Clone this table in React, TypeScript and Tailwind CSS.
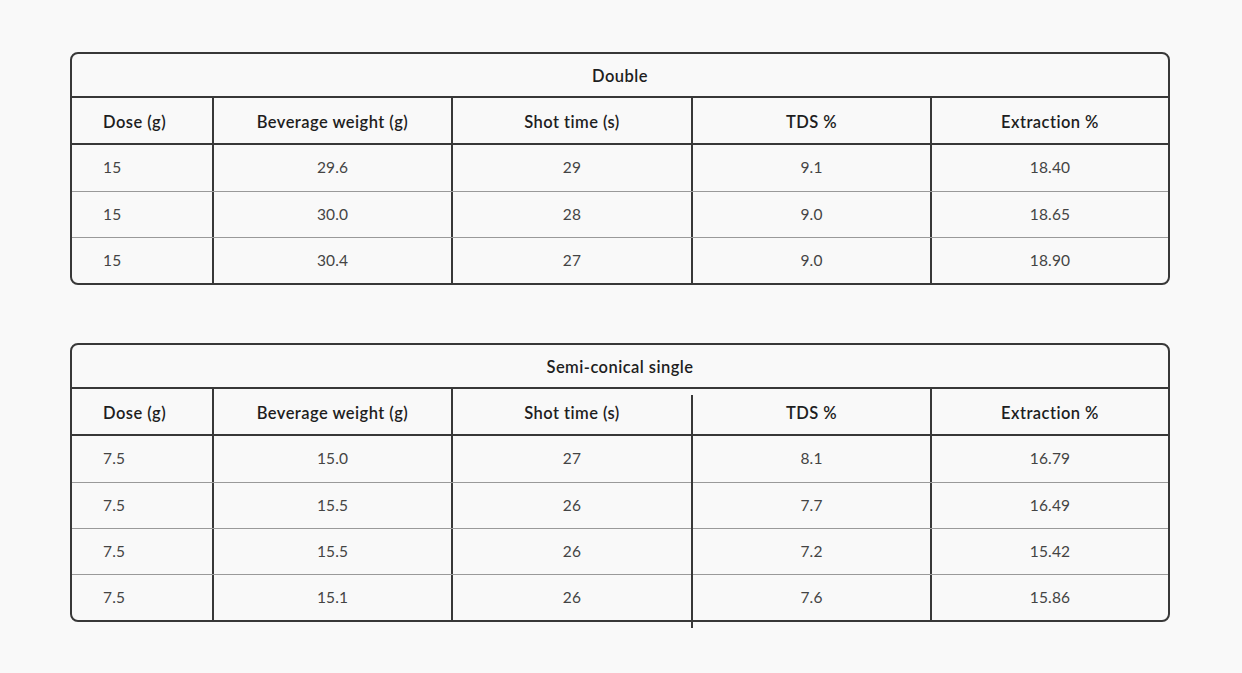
import React from "react";

type Table = { title: string; rows: string[][]; stray?: boolean };

const headers = ["Dose (g)", "Beverage weight (g)", "Shot time (s)", "TDS %", "Extraction %"];

const tables: Table[] = [
  {
    title: "Double",
    rows: [
      ["15", "29.6", "29", "9.1", "18.40"],
      ["15", "30.0", "28", "9.0", "18.65"],
      ["15", "30.4", "27", "9.0", "18.90"],
    ],
  },
  {
    title: "Semi-conical single",
    stray: true,
    rows: [
      ["7.5", "15.0", "27", "8.1", "16.79"],
      ["7.5", "15.5", "26", "7.7", "16.49"],
      ["7.5", "15.5", "26", "7.2", "15.42"],
      ["7.5", "15.1", "26", "7.6", "15.86"],
    ],
  },
];

function Cell({ text, idx, head, stray }: { text: string; idx: number; head?: boolean; stray?: boolean }) {
  const last = idx === 4;
  const border = last ? "" : stray && idx === 2 ? "border-r-2 border-transparent" : "border-r-2 border-[#383838]";
  const align = idx === 0 ? "justify-start pl-[31px]" : "justify-center";
  const weight = head
    ? "font-semibold text-[#1e1e1e] text-[16.5px] tracking-[0.45px] pt-[3px]"
    : "font-normal text-[#444444] text-[15.5px] tracking-[0.15px]";
  return <div className={`flex items-center ${align} ${border} ${weight}`}>{text}</div>;
}

function DataTable({ t }: { t: Table }) {
  const grid = "grid grid-cols-[142px_239px_240px_239px_1fr]";
  return (
    <div className="relative">
      <div className="w-[1100px] rounded-[8px] border-2 border-[#383838] overflow-hidden leading-none">
        <div className="h-[44px] pt-[2px] flex items-center justify-center font-semibold text-[#1e1e1e] text-[16.5px] tracking-[0.45px] border-b-2 border-[#383838]">
          {t.title}
        </div>
        <div className={`${grid} h-[47px] border-b-2 border-[#383838]`}>
          {headers.map((h, i) => (
            <Cell key={i} text={h} idx={i} head stray={t.stray} />
          ))}
        </div>
        {t.rows.map((r, ri) => (
          <div key={ri} className={`${grid} h-[46px] ${ri > 0 ? "border-t border-[#9a9a9a]" : ""}`}>
            {r.map((c, i) => (
              <Cell key={i} text={c} idx={i} stray={t.stray} />
            ))}
          </div>
        ))}
      </div>
      {t.stray && (
        <div className="absolute left-[621px] top-[52px] bottom-[-6px] w-[2px] bg-[#383838]" />
      )}
    </div>
  );
}

export default function App() {
  return (
    <div
      className="min-h-[673px] w-[1242px] bg-[#f9f9f9] pt-[52px] pl-[70px] flex flex-col gap-[58px]"
      style={{ fontFamily: "Lato, 'Open Sans', sans-serif" }}
    >
      {tables.map((t, i) => (
        <DataTable key={i} t={t} />
      ))}
    </div>
  );
}
